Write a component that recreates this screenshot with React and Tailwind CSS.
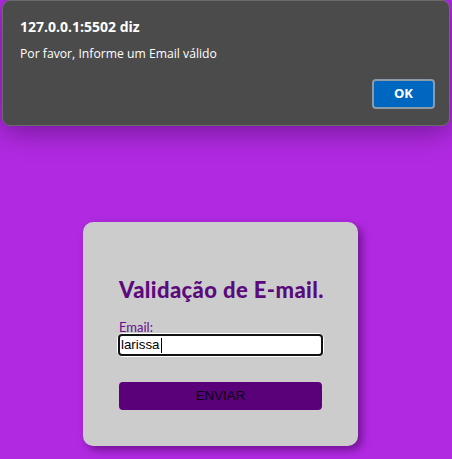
export default function App() {
  return (
    <div className="relative w-[452px] h-[459px] overflow-hidden bg-[#b12ae2]">
      <div className="pl-[83px] pt-[222px]">
        <div className="w-[275px] h-[224px] rounded-[10px] bg-[#cccccc] shadow-[4px_4px_8px_rgba(60,0,80,0.55)] px-[36px] pt-[54px] flex flex-col">
          <h1
            className="text-[22px] leading-[28px] font-black text-[#5b0a7c] whitespace-nowrap tracking-[0.4px]"
            style={{ fontFamily: '"Lato", "Open Sans", sans-serif' }}
          >
            Validação de E-mail.
          </h1>
          <label
            className="mt-[16px] text-[13px] leading-[14px] text-[#6a0a8c]"
            style={{ fontFamily: '"Lato", "Open Sans", sans-serif' }}
          >
            Email:
          </label>
          <div className="-ml-[1px] w-[205px] h-[22px] rounded-[5px] bg-white ring-1 ring-white">
            <div className="w-full h-full rounded-[4px] border-2 border-[#111111] flex items-center pl-[1px]">
              <span
                className="text-[13.33px] text-black leading-none"
                style={{ fontFamily: '"Liberation Sans", Arial, sans-serif' }}
              >
                larissa
              </span>
              <span className="ml-[1px] w-[1px] h-[15px] bg-black" />
            </div>
          </div>
          <button
            className="mt-[26px] w-[203px] h-[28px] rounded-[4px] bg-[#5a0079] text-[13.33px] text-[#080010] flex items-center justify-center"
            style={{ fontFamily: '"Liberation Sans", Arial, sans-serif' }}
          >
            ENVIAR
          </button>
        </div>
      </div>

      <div className="absolute left-[2px] top-0 w-[448px] h-[126px] rounded-[8px] bg-[#4b4b4b] border border-[#6b6b6b] shadow-[0_6px_28px_rgba(40,0,60,0.45)]">
        <div
          className="pl-[17px] pt-[16px] text-[14px] leading-[20px] font-bold text-white"
          style={{ fontFamily: '"Open Sans", "Noto Sans", sans-serif' }}
        >
          127.0.0.1:5502 diz
        </div>
        <div
          className="pl-[17px] pt-[8px] text-[12.2px] leading-[18px] text-white"
          style={{ fontFamily: '"Open Sans", "Noto Sans", sans-serif' }}
        >
          Por favor, Informe um Email válido
        </div>
        <div className="absolute left-[369px] top-[78px] w-[63px] h-[30px] rounded-[4px] border-2 border-[#8b9aa8] bg-[#0067c0] flex items-center justify-center">
          <span
            className="text-[13px] font-bold text-white"
            style={{ fontFamily: '"Open Sans", "Noto Sans", sans-serif' }}
          >
            OK
          </span>
        </div>
      </div>
    </div>
  );
}
